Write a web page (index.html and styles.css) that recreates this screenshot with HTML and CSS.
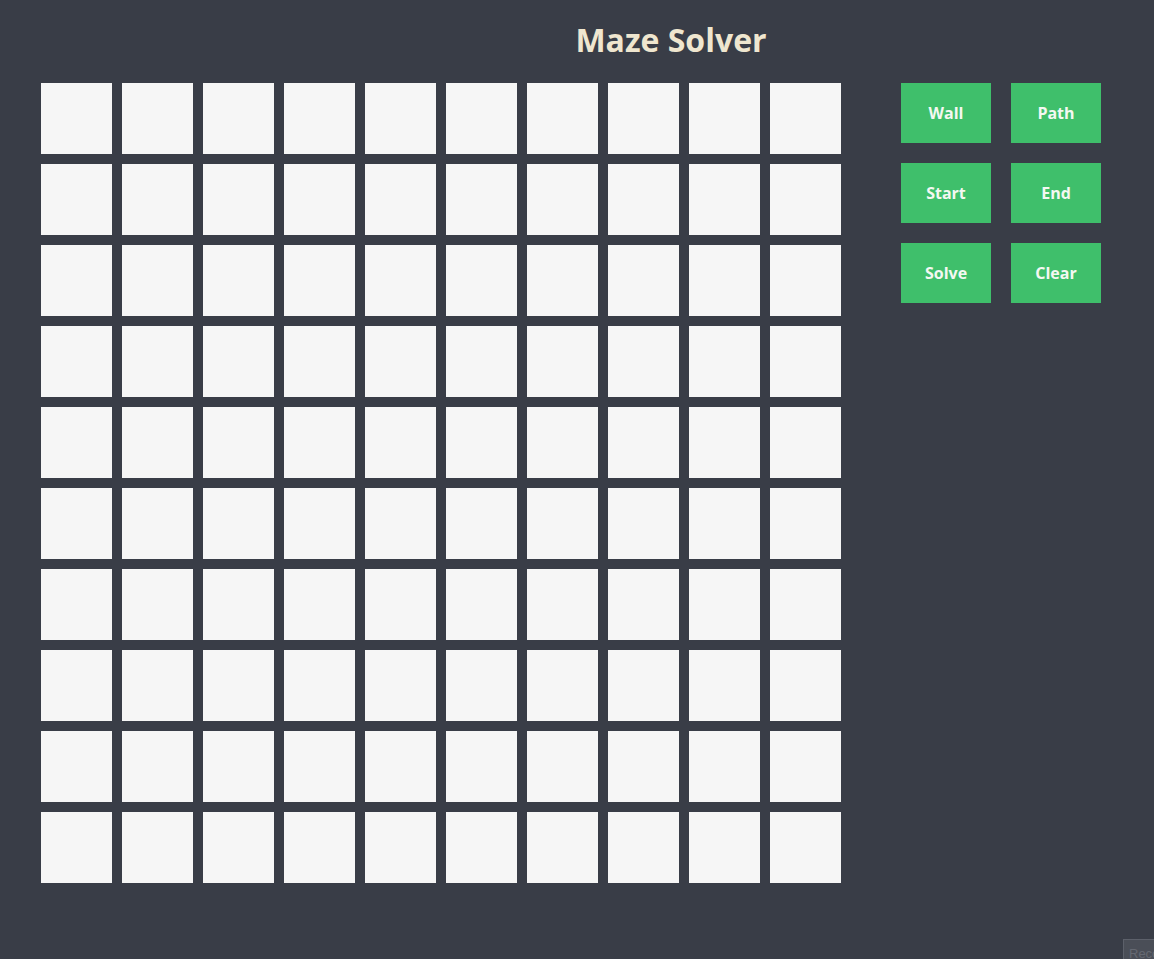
FILE: index.html
```html
<!DOCTYPE html>
<html lang="en">
<head>
<meta charset="utf-8">
<title>Maze Solver</title>
<link rel="stylesheet" href="styles.css">
</head>
<body>
<header class="header"><h1 class="title">Maze Solver</h1></header>
<main class="main">
  <div class="grid" id="grid"></div>
  <div class="controls">
    <button class="btn">Wall</button>
    <button class="btn">Path</button>
    <button class="btn">Start</button>
    <button class="btn">End</button>
    <button class="btn">Solve</button>
    <button class="btn">Clear</button>
  </div>
</main>
<div class="badge">Reco</div>
<script>
  var g = document.getElementById('grid');
  for (var i = 0; i < 100; i++) { var c = document.createElement('div'); c.className = 'cell'; g.appendChild(c); }
</script>
</body>
</html>
```
FILE: styles.css
```css
html, body { margin: 0; padding: 0; }
body {
  background: #393d47;
  font-family: "Open Sans", sans-serif;
  width: 1154px;
  height: 959px;
  overflow: hidden;
  position: relative;
}
.header {
  display: flex;
  justify-content: center;
  padding-left: 188px;
  height: 83px;
  box-sizing: border-box;
  padding-top: 19px;
}
.title {
  margin: 0;
  color: #efe6cf;
  font-size: 32px;
  font-weight: 700;
  line-height: 42px;
}
.main {
  display: flex;
  padding-left: 41px;
  gap: 60px;
}
.grid {
  display: grid;
  grid-template-columns: repeat(10, 71px);
  grid-auto-rows: 71px;
  gap: 10px;
}
.cell { background: #f6f6f6; }
.controls {
  display: grid;
  grid-template-columns: 90px 90px;
  grid-auto-rows: 60px;
  column-gap: 20px;
  row-gap: 20px;
  align-content: start;
}
.btn {
  background: #3fbf6b;
  color: #f4f8f2;
  border: none;
  font-family: "Open Sans", sans-serif;
  font-weight: 700;
  font-size: 16px;
  padding: 0;
  cursor: pointer;
}
.badge {
  position: absolute;
  left: 1123px;
  top: 939px;
  width: 40px;
  height: 30px;
  background: #4a4e57;
  border: 1px solid #5c606a;
  color: #656972;
  font-family: "Liberation Sans", sans-serif;
  font-size: 13px;
  line-height: 13px;
  padding: 7px 0 0 5px;
  box-sizing: border-box;
}
```
